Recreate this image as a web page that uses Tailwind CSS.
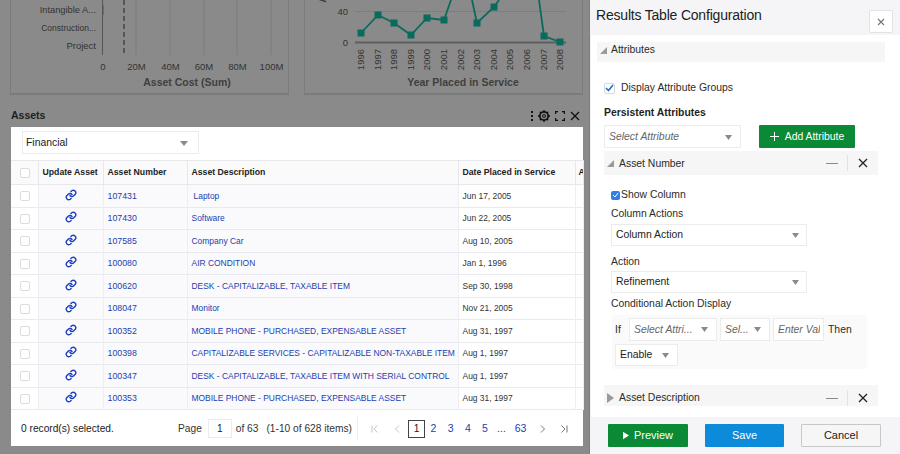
<!DOCTYPE html>
<html>
<head>
<meta charset="utf-8">
<script src="https://cdn.jsdelivr.net/npm/@tailwindcss/browser@4"></script>
</head>
<body class="m-0 overflow-hidden">
<div class="flex w-[900px] h-[454px] overflow-hidden bg-white text-[#2b2b2b] font-['Liberation_Sans',Arial,sans-serif]">
  <!-- dimmed page -->
  <div class="w-[590px] h-[454px] shrink-0 bg-[#8a8a8a] border-r border-[#7f7f7f] flex flex-col">
    <div class="flex h-[95px] shrink-0 pl-[10px] gap-[15px]">
      <div class="w-[279px] h-[95px] border border-t-0 border-[#7b7b7b] border-b-2">
        <svg width="277" height="93" viewBox="11 0 277 93" class="block font-['Liberation_Sans',Arial,sans-serif]">
          <g stroke="#7d7d7d" stroke-width="1"><path d="M136 0V55M170 0V55M204 0V55M237 0V55M271 0V55"/></g>
          <path d="M102.500 0V55" stroke="#555" stroke-width="1"/>
          <path d="M103.500 5V15" stroke="#8a5a78" stroke-width="1"/>
          <path d="M124 0V55" stroke="#555" stroke-width="2" stroke-dasharray="5 3"/>
          <g fill="#333" text-anchor="end">
            <text x="96" y="13" font-size="9.300">Intangible A...</text>
            <text x="96" y="30.500" font-size="8.500">Construction...</text>
            <text x="96" y="48.500" font-size="9.500">Project</text>
          </g>
          <g fill="#333" font-size="9.500" text-anchor="middle">
            <text x="103" y="70">0</text><text x="136.500" y="70">20M</text><text x="170.500" y="70">40M</text><text x="204" y="70">60M</text><text x="237.500" y="70">80M</text><text x="271.500" y="70">100M</text>
          </g>
          <text x="187" y="86" fill="#3f3f3f" font-size="10.500" font-weight="700" text-anchor="middle">Asset Cost (Sum)</text>
        </svg>
      </div>
      <div class="w-[279px] h-[95px] border border-t-0 border-[#7b7b7b] border-b-2">
        <svg width="277" height="93" viewBox="305 0 277 93" class="block font-['Liberation_Sans',Arial,sans-serif]">
          <path d="M355 11.500H566" stroke="#7d7d7d"/>
          <path d="M355 42.500H566" stroke="#5f5f5f" stroke-width="2"/>
          <path d="M361 33L378 15L394 23L411 35L427 18L444 20L451 0M472 0L477 23L494 7L499 0M539 0L544 36L560 42" fill="none" stroke="#0a6a5c" stroke-width="1.800"/>
          <g fill="#0a6a5c">
            <rect x="357.500" y="29.500" width="7" height="7"/><rect x="374.500" y="11.500" width="7" height="7"/><rect x="390.500" y="19.500" width="7" height="7"/><rect x="407.500" y="31.500" width="7" height="7"/><rect x="423.500" y="14.500" width="7" height="7"/><rect x="440.500" y="16.500" width="7" height="7"/><rect x="473.500" y="19.500" width="7" height="7"/><rect x="490.500" y="3.500" width="7" height="7"/><rect x="540.500" y="32.500" width="7" height="7"/><rect x="556.500" y="38.500" width="7" height="7"/>
          </g>
          <g fill="#333" font-size="9.500" text-anchor="end">
            <text x="348" y="15">40</text><text x="348" y="45.500">0</text>
          </g>
          <g fill="#333" font-size="9.500" text-anchor="end">
            <text transform="translate(364 49) rotate(-90)">1996</text>
            <text transform="translate(381 49) rotate(-90)">1997</text>
            <text transform="translate(397 49) rotate(-90)">1998</text>
            <text transform="translate(414 49) rotate(-90)">1999</text>
            <text transform="translate(430 49) rotate(-90)">2000</text>
            <text transform="translate(447 49) rotate(-90)">2001</text>
            <text transform="translate(464 49) rotate(-90)">2002</text>
            <text transform="translate(480 49) rotate(-90)">2003</text>
            <text transform="translate(497 49) rotate(-90)">2004</text>
            <text transform="translate(513 49) rotate(-90)">2005</text>
            <text transform="translate(530 49) rotate(-90)">2006</text>
            <text transform="translate(547 49) rotate(-90)">2007</text>
            <text transform="translate(563 49) rotate(-90)">2008</text>
          </g>
          <text fill="#3f3f3f" font-size="10.500" font-weight="700" transform="translate(326 -1) rotate(-90)" text-anchor="middle">A</text>
          <text x="463" y="86" fill="#3f3f3f" font-size="10.500" font-weight="700" text-anchor="middle">Year Placed in Service</text>
        </svg>
      </div>
    </div>
    <div class="flex items-center justify-between h-[32px] shrink-0 pl-[11px] pr-[9px] pt-[10px]">
      <span class="text-[10.500px] font-bold text-[#1f1f1f]">Assets</span>
      <div class="flex items-center gap-[4px] text-[#111]">
        <svg width="4" height="12" viewBox="0 0 4 12" fill="#111"><rect x="1" y="1" width="2" height="2"/><rect x="1" y="5" width="2" height="2"/><rect x="1" y="9" width="2" height="2"/></svg>
        <svg width="12" height="12" viewBox="0 0 12 12" fill="none" stroke="#111"><circle cx="6" cy="6" r="4.200" stroke-width="1.800"/><circle cx="6" cy="6" r="1.500" stroke-width="1"/><path d="M6 0V2M6 10V12M0 6H2M10 6H12M1.800 1.800L3 3M9 9L10.200 10.200M10.200 1.800L9 3M3 9L1.800 10.200" stroke-width="1.300"/></svg>
        <svg width="10" height="10" viewBox="0 0 10 10" fill="none" stroke="#111" stroke-width="1.200" class="ml-[1px]"><path d="M0.600 3V0.600H3M7 0.600H9.400V3M9.400 7V9.400H7M3 9.400H0.600V7"/></svg>
        <svg width="10" height="10" viewBox="0 0 10 10" fill="none" stroke="#111" stroke-width="1.400" class="ml-[1px]"><path d="M1 1L9 9M9 1L1 9"/></svg>
      </div>
    </div>
    <!-- table card -->
    <div class="ml-[11px] w-[572px] h-[319px] bg-white flex flex-col shrink-0">
      <div class="h-[33px] shrink-0 pl-[11px] pt-[4px]">
        <div class="w-[177px] h-[23px] border border-[#ebebeb] flex items-center justify-between pl-[3px] pr-[10px] pt-[1px] text-[10.400px] text-[#222]">
          <span>Financial</span>
          <svg width="8" height="5" viewBox="0 0 8 5" fill="#8a8a8a"><path d="M0 0H8L4 5Z"/></svg>
        </div>
      </div>
      <table class="table-fixed border-collapse w-[572px] text-[8.450px] h-[249px] shrink-0">
        <colgroup><col class="w-[27px]"><col class="w-[65px]"><col class="w-[84px]"><col class="w-[271px]"><col class="w-[117px]"><col class="w-[8px]"></colgroup>
        <thead>
          <tr class="h-[24px] bg-[#fafafa] font-bold text-[#222] text-[8.700px] border-y border-[#e8e8ec] [&>th]:border-r [&>th]:border-[#e8e8ec] [&>th]:font-bold [&>th]:text-left [&>th]:pl-[4px]">
            <th><span class="block w-[10px] h-[10px] ml-[5px] border border-[#dcdcdc] rounded-[2px] bg-white"></span></th><th class="whitespace-nowrap">Update Asset</th><th>Asset Number</th><th>Asset Description</th><th>Date Placed in Service</th><th class="!pl-[3px] overflow-hidden">A</th>
          </tr>
        </thead>
        <tbody class="text-[#1b3fb0] [&>tr]:h-[22.500px] [&>tr]:border-b [&>tr]:border-[#e9e9f0] [&_td]:border-r [&_td]:border-[#ededf2] [&_td]:pl-[4px] [&_td]:pt-[1px] [&_td:nth-child(5)]:text-[#333] [&_td:nth-child(1)]:bg-white [&_td:nth-child(5)]:bg-white [&_td:nth-child(n+2):nth-child(-n+4)]:bg-[#fafafc] [&_svg]:mb-[3px] [&_td:nth-child(3)]:text-[8.800px]">
          <tr><td><span class="block w-[10px] h-[10px] ml-[5px] border border-[#dcdcdc] rounded-[2px]"></span></td><td class="!pl-0"><svg class="mx-auto" width="12" height="12" viewBox="0 0 24 24" fill="none" stroke="#1b3fc0" stroke-width="2.800" stroke-linecap="round"><path d="M10 13a5 5 0 0 0 7.500.500l3-3a5 5 0 0 0-7-7l-1.700 1.700"/><path d="M14 11a5 5 0 0 0-7.500-.500l-3 3a5 5 0 0 0 7 7l1.700-1.700"/></svg></td><td>107431</td><td><span class="pl-[2px]">Laptop</span></td><td>Jun 17, 2005</td><td></td></tr>
          <tr><td><span class="block w-[10px] h-[10px] ml-[5px] border border-[#dcdcdc] rounded-[2px]"></span></td><td class="!pl-0"><svg class="mx-auto" width="12" height="12" viewBox="0 0 24 24" fill="none" stroke="#1b3fc0" stroke-width="2.800" stroke-linecap="round"><path d="M10 13a5 5 0 0 0 7.500.500l3-3a5 5 0 0 0-7-7l-1.700 1.700"/><path d="M14 11a5 5 0 0 0-7.500-.500l-3 3a5 5 0 0 0 7 7l1.700-1.700"/></svg></td><td>107430</td><td>Software</td><td>Jun 22, 2005</td><td></td></tr>
          <tr><td><span class="block w-[10px] h-[10px] ml-[5px] border border-[#dcdcdc] rounded-[2px]"></span></td><td class="!pl-0"><svg class="mx-auto" width="12" height="12" viewBox="0 0 24 24" fill="none" stroke="#1b3fc0" stroke-width="2.800" stroke-linecap="round"><path d="M10 13a5 5 0 0 0 7.500.500l3-3a5 5 0 0 0-7-7l-1.700 1.700"/><path d="M14 11a5 5 0 0 0-7.500-.500l-3 3a5 5 0 0 0 7 7l1.700-1.700"/></svg></td><td>107585</td><td>Company Car</td><td>Aug 10, 2005</td><td></td></tr>
          <tr><td><span class="block w-[10px] h-[10px] ml-[5px] border border-[#dcdcdc] rounded-[2px]"></span></td><td class="!pl-0"><svg class="mx-auto" width="12" height="12" viewBox="0 0 24 24" fill="none" stroke="#1b3fc0" stroke-width="2.800" stroke-linecap="round"><path d="M10 13a5 5 0 0 0 7.500.500l3-3a5 5 0 0 0-7-7l-1.700 1.700"/><path d="M14 11a5 5 0 0 0-7.500-.500l-3 3a5 5 0 0 0 7 7l1.700-1.700"/></svg></td><td>100080</td><td>AIR CONDITION</td><td>Jan 1, 1996</td><td></td></tr>
          <tr><td><span class="block w-[10px] h-[10px] ml-[5px] border border-[#dcdcdc] rounded-[2px]"></span></td><td class="!pl-0"><svg class="mx-auto" width="12" height="12" viewBox="0 0 24 24" fill="none" stroke="#1b3fc0" stroke-width="2.800" stroke-linecap="round"><path d="M10 13a5 5 0 0 0 7.500.500l3-3a5 5 0 0 0-7-7l-1.700 1.700"/><path d="M14 11a5 5 0 0 0-7.500-.500l-3 3a5 5 0 0 0 7 7l1.700-1.700"/></svg></td><td>100620</td><td>DESK - CAPITALIZABLE, TAXABLE ITEM</td><td>Sep 30, 1998</td><td></td></tr>
          <tr><td><span class="block w-[10px] h-[10px] ml-[5px] border border-[#dcdcdc] rounded-[2px]"></span></td><td class="!pl-0"><svg class="mx-auto" width="12" height="12" viewBox="0 0 24 24" fill="none" stroke="#1b3fc0" stroke-width="2.800" stroke-linecap="round"><path d="M10 13a5 5 0 0 0 7.500.500l3-3a5 5 0 0 0-7-7l-1.700 1.700"/><path d="M14 11a5 5 0 0 0-7.500-.500l-3 3a5 5 0 0 0 7 7l1.700-1.700"/></svg></td><td>108047</td><td>Monitor</td><td>Nov 21, 2005</td><td></td></tr>
          <tr><td><span class="block w-[10px] h-[10px] ml-[5px] border border-[#dcdcdc] rounded-[2px]"></span></td><td class="!pl-0"><svg class="mx-auto" width="12" height="12" viewBox="0 0 24 24" fill="none" stroke="#1b3fc0" stroke-width="2.800" stroke-linecap="round"><path d="M10 13a5 5 0 0 0 7.500.500l3-3a5 5 0 0 0-7-7l-1.700 1.700"/><path d="M14 11a5 5 0 0 0-7.500-.500l-3 3a5 5 0 0 0 7 7l1.700-1.700"/></svg></td><td>100352</td><td>MOBILE PHONE - PURCHASED, EXPENSABLE ASSET</td><td>Aug 31, 1997</td><td></td></tr>
          <tr><td><span class="block w-[10px] h-[10px] ml-[5px] border border-[#dcdcdc] rounded-[2px]"></span></td><td class="!pl-0"><svg class="mx-auto" width="12" height="12" viewBox="0 0 24 24" fill="none" stroke="#1b3fc0" stroke-width="2.800" stroke-linecap="round"><path d="M10 13a5 5 0 0 0 7.500.500l3-3a5 5 0 0 0-7-7l-1.700 1.700"/><path d="M14 11a5 5 0 0 0-7.500-.500l-3 3a5 5 0 0 0 7 7l1.700-1.700"/></svg></td><td>100398</td><td class="whitespace-nowrap">CAPITALIZABLE SERVICES - CAPITALIZABLE NON-TAXABLE ITEM</td><td>Aug 1, 1997</td><td></td></tr>
          <tr><td><span class="block w-[10px] h-[10px] ml-[5px] border border-[#dcdcdc] rounded-[2px]"></span></td><td class="!pl-0"><svg class="mx-auto" width="12" height="12" viewBox="0 0 24 24" fill="none" stroke="#1b3fc0" stroke-width="2.800" stroke-linecap="round"><path d="M10 13a5 5 0 0 0 7.500.500l3-3a5 5 0 0 0-7-7l-1.700 1.700"/><path d="M14 11a5 5 0 0 0-7.500-.500l-3 3a5 5 0 0 0 7 7l1.700-1.700"/></svg></td><td>100347</td><td class="whitespace-nowrap">DESK - CAPITALIZABLE, TAXABLE ITEM WITH SERIAL CONTROL</td><td>Aug 1, 1997</td><td></td></tr>
          <tr><td><span class="block w-[10px] h-[10px] ml-[5px] border border-[#dcdcdc] rounded-[2px]"></span></td><td class="!pl-0"><svg class="mx-auto" width="12" height="12" viewBox="0 0 24 24" fill="none" stroke="#1b3fc0" stroke-width="2.800" stroke-linecap="round"><path d="M10 13a5 5 0 0 0 7.500.500l3-3a5 5 0 0 0-7-7l-1.700 1.700"/><path d="M14 11a5 5 0 0 0-7.500-.500l-3 3a5 5 0 0 0 7 7l1.700-1.700"/></svg></td><td>100353</td><td>MOBILE PHONE - PURCHASED, EXPENSABLE ASSET</td><td>Aug 31, 1997</td><td></td></tr>
        </tbody>
      </table>
      <div class="flex items-center h-[37px] shrink-0 text-[10.200px] text-[#333] pl-[10px]">
        <span class="w-[157px] text-[#222] whitespace-nowrap">0 record(s) selected.</span>
        <span>Page</span>
        <span class="ml-[6px] w-[24px] h-[19px] border border-[#ececec] flex items-center justify-center text-[#222]">1</span>
        <span class="ml-[4px]">of 63</span>
        <span class="ml-[8px] whitespace-nowrap">(1-10 of 628 items)</span>
        <span class="ml-[5px] w-px h-[24px] bg-[#eeeeee]"></span>
        <span class="ml-[13px] w-[8px] flex"><svg width="8" height="8" viewBox="0 0 8 8" fill="none" stroke="#c4c4c4" stroke-width="1"><path d="M1 .500V7.500M6.500 .500L3 4L6.500 7.500"/></svg></span>
        <span class="ml-[15px] w-[8px] flex"><svg width="6" height="8" viewBox="0 0 6 8" fill="none" stroke="#c4c4c4" stroke-width="1"><path d="M5 .500L1.500 4L5 7.500"/></svg></span>
        <span class="ml-[6px] w-[17px] h-[18px] border border-[#444] flex items-center justify-center text-[#222]">1</span>
        <div class="flex text-[#1b3fb0] text-[10.500px]">
          <span class="w-[17px] text-center">2</span><span class="w-[17.500px] text-center">3</span><span class="w-[17px] text-center">4</span><span class="w-[17px] text-center">5</span><span class="w-[16px] text-center text-[#444]">...</span><span class="w-[22px] text-center">63</span>
        </div>
        <span class="ml-[9px] w-[8px] flex"><svg width="6" height="8" viewBox="0 0 6 8" fill="none" stroke="#777" stroke-width="1"><path d="M1 .500L4.500 4L1 7.500"/></svg></span>
        <span class="ml-[12px] w-[8px] flex"><svg width="8" height="8" viewBox="0 0 8 8" fill="none" stroke="#777" stroke-width="1"><path d="M7 .500V7.500M1.500 .500L5 4L1.500 7.500"/></svg></span>
      </div>
    </div>
  </div>
  <!-- right panel -->
  <div class="flex-1 h-[454px] flex flex-col bg-white min-w-0">
    <div class="h-[35px] shrink-0 bg-[#f5f5f7] flex justify-between pl-[6px] pr-[7px]">
      <span class="text-[14px] tracking-[-0.200px] leading-[30px] text-[#222] whitespace-nowrap">Results Table Configuration</span>
      <span class="mt-[10px] w-[24px] h-[23px] border border-[#e2e2e2] bg-white rounded-[2px] flex items-center justify-center">
        <svg width="8" height="8" viewBox="0 0 8 8" fill="none" stroke="#777" stroke-width="1.200"><path d="M1 1L7 7M7 1L1 7"/></svg>
      </span>
    </div>
    <div class="h-[382px] shrink-0 overflow-hidden text-[10.400px] text-[#2b2b2b] border-l border-[#f2f2f2]">
      <div class="ml-[6px] mt-[7px] w-[288px] h-[20px] bg-[#f6f6f6] flex items-center gap-[4px] pl-[3px] pb-[4px]">
        <svg width="7" height="7" viewBox="0 0 7 7" fill="#9a9a9a"><path d="M7 0V7H0Z"/></svg><span>Attributes</span>
      </div>
      <label class="ml-[13px] mt-[20px] flex items-center gap-[6px] h-[12px]">
        <span class="w-[11px] h-[11px] border border-[#d8d8d8] rounded-[2px] bg-white flex items-center justify-center"><svg width="9" height="8" viewBox="0 0 9 8" fill="none" stroke="#1f6fd0" stroke-width="1.600"><path d="M1 4L3.500 6.500L8 1"/></svg></span>
        <span>Display Attribute Groups</span>
      </label>
      <div class="ml-[13px] mt-[13px] h-[12px] leading-[12px] font-bold text-[#1f1f1f]">Persistent Attributes</div>
      <div class="ml-[13px] mt-[6px] flex gap-[18px] h-[23px]">
        <div class="w-[137px] border border-[#ececec] flex items-center justify-between pl-[4px] pr-[8px] pt-[1px] italic text-[#666]"><span>Select Attribute</span><svg width="7" height="5" viewBox="0 0 7 5" fill="#8a8a8a"><path d="M0 0H7L3.500 5Z"/></svg></div>
        <div class="w-[96px] bg-[#0a8a35] text-white flex items-center justify-center gap-[6px] rounded-[1px]"><svg width="9" height="9" viewBox="0 0 9 9" stroke="#fff" stroke-width="1"><path d="M4.500 0V9M0 4.500H9"/></svg><span>Add Attribute</span></div>
      </div>
      <div class="ml-[13px] mt-[3px] w-[274px] h-[24px] bg-[#f6f6f6] flex items-center pl-[3px] pr-[10px]">
        <svg width="7" height="7" viewBox="0 0 7 7" fill="#9a9a9a" class="mr-[5px]"><path d="M7 0V7H0Z"/></svg><span class="flex-1 pt-[1px]">Asset Number</span>
        <span class="w-[12px] h-px bg-[#888]"></span><span class="ml-[9px] w-px h-[16px] bg-[#e2e2e2]"></span>
        <svg class="ml-[10px]" width="10" height="10" viewBox="0 0 10 10" fill="none" stroke="#222" stroke-width="1.300"><path d="M1 1L9 9M9 1L1 9"/></svg>
      </div>
      <div class="ml-[20px] mt-[15px] flex items-center h-[10px] gap-[1px]">
        <span class="w-[9px] h-[9px] rounded-[2px] bg-[#2f80e8] flex items-center justify-center"><svg width="7" height="6" viewBox="0 0 7 6" fill="none" stroke="#fff" stroke-width="1"><path d="M1 3L3 5L6 1"/></svg></span>
        <span>Show Column</span>
      </div>
      <div class="ml-[20px] mt-[8px] leading-[12px]">Column Actions</div>
      <div class="ml-[20px] mt-[4px] w-[196px] h-[22px] border border-[#ececec] flex items-center justify-between pl-[4px] pr-[7px] text-[#222]"><span>Column Action</span><svg width="7" height="5" viewBox="0 0 7 5" fill="#8a8a8a"><path d="M0 0H7L3.500 5Z"/></svg></div>
      <div class="ml-[20px] mt-[10px] leading-[12px]">Action</div>
      <div class="ml-[20px] mt-[3px] w-[196px] h-[22px] border border-[#ececec] flex items-center justify-between pl-[4px] pr-[7px] text-[#222]"><span>Refinement</span><svg width="7" height="5" viewBox="0 0 7 5" fill="#8a8a8a"><path d="M0 0H7L3.500 5Z"/></svg></div>
      <div class="ml-[20px] mt-[5px] leading-[12px]">Conditional Action Display</div>
      <div class="ml-[21px] mt-[5px] w-[255px] h-[54px] bg-[#fafafa] pl-[3px] pt-[3px]">
        <div class="flex items-center h-[23px]">
          <span class="w-[14px]">If</span>
          <div class="w-[88px] h-[23px] bg-white border border-[#ececec] flex items-center justify-between pl-[4px] pr-[8px] italic text-[#666]"><span>Select Attri...</span><svg width="7" height="5" viewBox="0 0 7 5" fill="#8a8a8a"><path d="M0 0H7L3.500 5Z"/></svg></div>
          <div class="ml-[3px] w-[50px] h-[23px] bg-white border border-[#ececec] flex items-center justify-between pl-[4px] pr-[8px] italic text-[#666]"><span>Sel...</span><svg width="7" height="5" viewBox="0 0 7 5" fill="#8a8a8a"><path d="M0 0H7L3.500 5Z"/></svg></div>
          <div class="ml-[3px] w-[51px] h-[23px] bg-white border border-[#ececec] flex items-center pl-[4px] italic text-[#666] overflow-hidden whitespace-nowrap"><span class="w-[42px] overflow-hidden">Enter Value</span></div>
          <span class="ml-[4px]">Then</span>
        </div>
        <div class="mt-[3px] w-[63px] h-[22px] bg-white border border-[#ececec] flex items-center justify-between pl-[4px] pr-[8px] text-[#222]"><span>Enable</span><svg width="7" height="5" viewBox="0 0 7 5" fill="#8a8a8a"><path d="M0 0H7L3.500 5Z"/></svg></div>
      </div>
      <div class="ml-[13px] mt-[16px] w-[274px] h-[21px] overflow-hidden">
        <div class="h-[26px] bg-[#f6f6f6] flex items-center pl-[3px] pr-[10px]">
          <svg width="7" height="10" viewBox="0 0 7 10" fill="#9a9a9a" class="mr-[5px]"><path d="M0 0L7 5L0 10Z"/></svg><span class="flex-1">Asset Description</span>
          <span class="w-[12px] h-px bg-[#888]"></span><span class="ml-[9px] w-px h-[16px] bg-[#e2e2e2]"></span>
          <svg class="ml-[10px]" width="10" height="10" viewBox="0 0 10 10" fill="none" stroke="#222" stroke-width="1.300"><path d="M1 1L9 9M9 1L1 9"/></svg>
        </div>
      </div>
    </div>
    <div class="h-[37px] shrink-0 bg-[#f5f5f7] flex gap-[17px] pl-[18px] pt-[7px] text-[11px]">
      <div class="w-[80px] h-[23px] bg-[#0a8a35] text-white flex items-center justify-center gap-[5px] rounded-[1px]"><svg width="6" height="9" viewBox="0 0 7 9" fill="#fff"><path d="M0 0L7 4.500L0 9Z"/></svg><span>Preview</span></div>
      <div class="w-[79px] h-[23px] bg-[#0b8bd9] text-white flex items-center justify-center rounded-[1px]">Save</div>
      <div class="w-[80px] h-[23px] bg-[#f6f6f6] border border-[#c8c8c8] text-[#222] flex items-center justify-center rounded-[1px]">Cancel</div>
    </div>
  </div>
</div>
</body>
</html>
